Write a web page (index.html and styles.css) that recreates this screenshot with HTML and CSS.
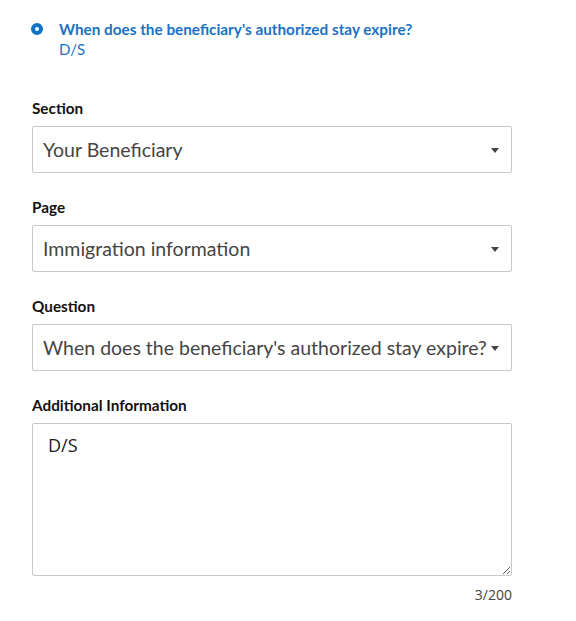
FILE: index.html
```html
<!DOCTYPE html>
<html>
<head>
<meta charset="utf-8">
<link rel="stylesheet" href="styles.css">
</head>
<body>
<div class="page">
  <div class="summary">
    <span class="radio"></span>
    <div class="summary-text">
      <div class="summary-title">When does the beneficiary's authorized stay expire?</div>
      <div class="summary-value">D/S</div>
    </div>
  </div>

  <div class="field">
    <div class="label">Section</div>
    <div class="select"><span class="select-text">Your Beneficiary</span><span class="caret"></span></div>
  </div>
  <div class="field">
    <div class="label">Page</div>
    <div class="select"><span class="select-text">Immigration information</span><span class="caret"></span></div>
  </div>
  <div class="field">
    <div class="label">Question</div>
    <div class="select"><span class="select-text">When does the beneficiary's authorized stay expire?</span><span class="caret"></span></div>
  </div>
  <div class="field">
    <div class="label">Additional Information</div>
    <textarea class="textarea">D/S</textarea>
    <div class="counter">3/200</div>
  </div>
</div>
</body>
</html>
```
FILE: styles.css
```css
html, body {
  margin: 0;
  padding: 0;
  background: #fff;
}
body {
  font-family: Lato, "Liberation Sans", sans-serif;
  color: #1b1b1b;
}
.page {
  width: 480px;
  padding: 18px 0 0 32px;
}
.summary {
  display: flex;
  align-items: flex-start;
  margin-bottom: 39px;
}
.radio {
  flex: none;
  width: 12px;
  height: 12px;
  border-radius: 50%;
  position: relative;
  margin: 5px 16px 0 0;
  left: -1px;
  box-sizing: border-box;
  border: 4px solid #0f73c9;
  background: #fff;
}
.summary-text {
  margin-left: -1px;
}
.summary-title {
  font-size: 15.3px;
  font-weight: 700;
  color: #1a72c4;
  line-height: 22px;
}
.summary-value {
  font-size: 15px;
  color: #1a72c4;
  line-height: 19px;
}
.field {
  margin-bottom: 24px;
}
.label {
  font-size: 15.3px;
  font-weight: 700;
  color: #111;
  line-height: 20px;
  margin-bottom: 8px;
}
.select {
  box-sizing: border-box;
  height: 47px;
  border: 1px solid #c8c8c8;
  border-radius: 2px;
  display: flex;
  align-items: center;
  padding: 0 12px 0 10px;
}
.select-text {
  font-size: 19.5px;
  color: #454545;
  white-space: nowrap;
  overflow: hidden;
  flex: 1;
}
.caret {
  flex: none;
  width: 0;
  height: 0;
  border-left: 4.5px solid transparent;
  border-right: 4.5px solid transparent;
  border-top: 5px solid #444;
  margin-top: 2px;
}
.textarea {
  display: block;
  box-sizing: border-box;
  width: 480px;
  height: 153px;
  border: 1px solid #c8c8c8;
  border-radius: 2px;
  padding: 9px 15px;
  font-family: "Open Sans", "Noto Sans", sans-serif;
  font-size: 18px;
  color: #1b1b1b;
  margin: 0;
  resize: vertical;
}
.counter {
  text-align: right;
  font-family: "Open Sans", "Noto Sans", sans-serif;
  font-size: 14px;
  color: #444;
  margin-top: 9px;
}
```
